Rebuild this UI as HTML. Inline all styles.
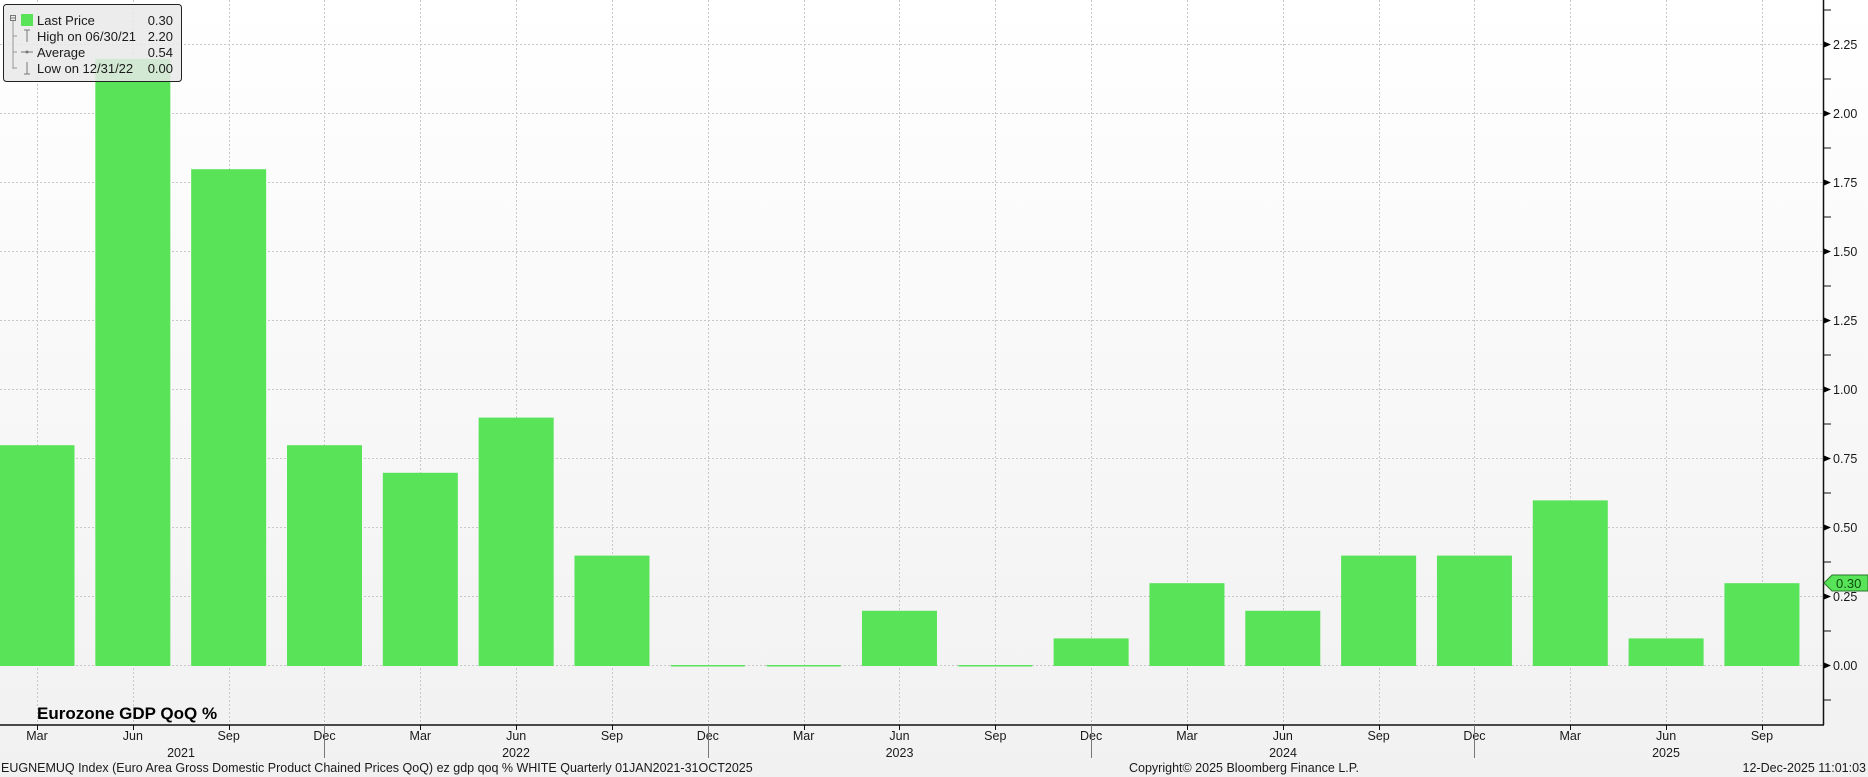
<!DOCTYPE html>
<html><head><meta charset="utf-8"><style>
html,body{margin:0;padding:0;width:1868px;height:777px;overflow:hidden;background:#fff}
svg{display:block}
text{font-family:"Liberation Sans",sans-serif;fill:#1a1a1a}
</style></head><body>
<svg width="1868" height="777" viewBox="0 0 1868 777" xmlns="http://www.w3.org/2000/svg">
<defs>
<linearGradient id="bg" x1="0" y1="0" x2="0" y2="1">
<stop offset="0" stop-color="#ffffff"/><stop offset="1" stop-color="#f1f1f1"/>
</linearGradient>
</defs>
<rect width="1868" height="777" fill="url(#bg)"/>
<g stroke="#c8c8c8" stroke-width="1" stroke-dasharray="2,2">
<line x1="0" x2="1823" y1="44.5" y2="44.5"/><line x1="0" x2="1823" y1="113.5" y2="113.5"/>
<line x1="0" x2="1823" y1="182.5" y2="182.5"/><line x1="0" x2="1823" y1="251.5" y2="251.5"/>
<line x1="0" x2="1823" y1="320.5" y2="320.5"/><line x1="0" x2="1823" y1="389.5" y2="389.5"/>
<line x1="0" x2="1823" y1="458.5" y2="458.5"/><line x1="0" x2="1823" y1="527.5" y2="527.5"/>
<line x1="0" x2="1823" y1="596.5" y2="596.5"/><line x1="0" x2="1823" y1="665.5" y2="665.5"/>
</g>
<g stroke="#c8c8c8" stroke-width="1" stroke-dasharray="2,2" id="vg"></g>
<g id="bars" fill="#58e358"></g>
<!-- axes -->
<line x1="1823.5" y1="0" x2="1823.5" y2="725" stroke="#111" stroke-width="1.5"/>
<line x1="0" y1="725" x2="1824" y2="725" stroke="#111" stroke-width="1.5"/>
<g id="yax"></g>
<g id="xax"></g>
<!-- last price tag -->
<polygon points="1824,583 1832,575 1868,575 1868,591 1832,591" fill="#58e358" stroke="#2a7a2a" stroke-width="1"/>
<text x="1836" y="588" font-size="13" style="fill:#0d4d0d">0.30</text>
<!-- legend -->
<rect x="3.5" y="4.5" width="178" height="77" rx="3" fill="#e9e9e9" fill-opacity="0.85" stroke="#222" stroke-width="1"/>
<rect x="10.5" y="15.5" width="5" height="5" fill="none" stroke="#777"/>
<line x1="11" y1="18" x2="15" y2="18" stroke="#777"/>
<line x1="13" y1="21" x2="13" y2="69" stroke="#999"/>
<line x1="13" y1="36" x2="17" y2="36" stroke="#999"/><line x1="13" y1="52" x2="17" y2="52" stroke="#999"/><line x1="13" y1="68" x2="17" y2="68" stroke="#999"/>
<rect x="21" y="14" width="12" height="12" fill="#58e358"/>
<path d="M24 30h6M27 30v12" stroke="#777" fill="none"/>
<path d="M21 52h12" stroke="#777"/><circle cx="27" cy="52" r="1.5" fill="#777"/>
<path d="M24 74h6M27 62v12" stroke="#777" fill="none"/>
<g font-size="13">
<text x="37" y="25">Last Price</text><text x="173" y="25" text-anchor="end">0.30</text>
<text x="37" y="41">High on 06/30/21</text><text x="173" y="41" text-anchor="end">2.20</text>
<text x="37" y="57">Average</text><text x="173" y="57" text-anchor="end">0.54</text>
<text x="37" y="73">Low on 12/31/22</text><text x="173" y="73" text-anchor="end">0.00</text>
</g>
<text x="37" y="719" font-size="17" font-weight="bold" style="fill:#000">Eurozone GDP QoQ %</text>
<g font-size="12.5">
<text x="1" y="772">EUGNEMUQ Index (Euro Area Gross Domestic Product Chained  Prices QoQ) ez gdp qoq % WHITE Quarterly 01JAN2021-31OCT2025</text>
<text x="1129" y="772">Copyright© 2025 Bloomberg Finance L.P.</text>
<text x="1866" y="772" text-anchor="end">12-Dec-2025 11:01:03</text>
</g>
</svg>
<script>
(function(){
var ns="http://www.w3.org/2000/svg";
function el(p,t,a,txt){var e=document.createElementNS(ns,t);for(var k in a)e.setAttribute(k,a[k]);if(txt)e.textContent=txt;document.getElementById(p).appendChild(e);return e;}
var vals=[0.8,2.2,1.8,0.8,0.7,0.9,0.4,0,0,0.2,0,0.1,0.3,0.2,0.4,0.4,0.6,0.1,0.3];
var mons=["Mar","Jun","Sep","Dec"];
for(var i=0;i<19;i++){
 var cx=37+i*95.83;
 el("vg","line",{x1:Math.round(cx)+0.5,x2:Math.round(cx)+0.5,y1:0,y2:725});
 var h=vals[i]*276;
 if(h>0) el("bars","rect",{x:cx-37.5,y:666-h,width:75,height:h});
 else el("bars","rect",{x:cx-37,y:665,width:74,height:1.5});
 el("xax","line",{x1:Math.round(cx)+0.5,x2:Math.round(cx)+0.5,y1:725,y2:730,stroke:"#111"});
 el("xax","text",{x:cx,y:740,"font-size":"12.5","text-anchor":"middle"},mons[i%4]);
 if(i%4==3) el("xax","line",{x1:Math.round(cx)+0.5,x2:Math.round(cx)+0.5,y1:725,y2:758,stroke:"#777"});
}
var yrs=[[181,"2021"],[516,"2022"],[899.5,"2023"],[1283,"2024"],[1666,"2025"]];
yrs.forEach(function(y){el("xax","text",{x:y[0],y:757,"font-size":"12.5","text-anchor":"middle"},y[1]);});
for(var j=0;j<=9;j++){
 var y=665.5-j*69;
 el("yax","polygon",{points:(1824)+","+(y-3)+" 1831,"+y+" 1824,"+(y+3),fill:"#000"});
 el("yax","text",{x:1833,y:y+4.5,"font-size":"12.5"},(j*0.25).toFixed(2));
 var m=y-34.5; el("yax","line",{x1:1824,x2:1831,y1:m,y2:m,stroke:"#111"});
}
el("yax","line",{x1:1824,x2:1831,y1:700,y2:700,stroke:"#111"});
})();
</script>
</body></html>
